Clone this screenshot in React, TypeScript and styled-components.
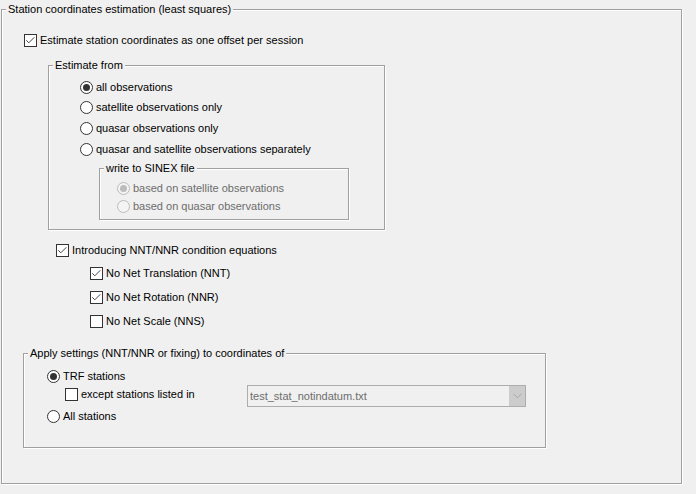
import React from "react";
import styled, { createGlobalStyle } from "styled-components";

const Global = createGlobalStyle`
  html, body { margin: 0; padding: 0; background: #f0f0f0; }
  body {
    font-family: "Liberation Sans", Arial, sans-serif;
    font-size: 11px;
    color: #000;
  }
`;

const Page = styled.div`
  width: 696px;
  height: 494px;
  overflow: hidden;
  box-sizing: border-box;
  padding: 9px 0 0 1px;
  background: #f0f0f0;
  display: flex;
  flex-direction: column;
  align-items: flex-start;
`;

const Group = styled.div<{ $w: number; $h: number; $ml?: number; $mt?: number }>`
  position: relative;
  box-sizing: border-box;
  flex-shrink: 0;
  width: ${(p) => p.$w}px;
  height: ${(p) => p.$h}px;
  margin-left: ${(p) => p.$ml ?? 0}px;
  margin-top: ${(p) => p.$mt ?? 0}px;
  border: 1px solid #a0a0a0;
  box-shadow: inset 1px 1px 0 #fff, 1px 1px 0 #fff;
  display: flex;
  flex-direction: column;
  align-items: flex-start;
`;

const Legend = styled.span`
  position: absolute;
  top: -7px;
  left: 4px;
  padding: 0 2px;
  background: #f0f0f0;
  line-height: 13px;
  white-space: nowrap;
  color: #000;
`;

const Option = styled.label<{ $ml?: number; $mt?: number; $w?: number; $disabled?: boolean }>`
  display: flex;
  align-items: center;
  gap: 3px;
  height: 13px;
  flex-shrink: 0;
  margin-left: ${(p) => p.$ml ?? 0}px;
  margin-top: ${(p) => p.$mt ?? 0}px;
  ${(p) => (p.$w ? `width: ${p.$w}px;` : "")}
  line-height: 13px;
  white-space: nowrap;
  color: ${(p) => (p.$disabled ? "#6d6d6d" : "#000")};
`;

const CheckBox = styled.span`
  width: 13px;
  height: 13px;
  box-sizing: border-box;
  flex-shrink: 0;
  border: 1px solid #333;
  background: #fff;
  display: flex;
`;

const RadioBox = styled.span<{ $checked?: boolean; $disabled?: boolean }>`
  width: 13px;
  height: 13px;
  box-sizing: border-box;
  flex-shrink: 0;
  border-radius: 50%;
  border: 1px solid ${(p) => (p.$disabled ? "#bcbcbc" : "#333")};
  background: ${(p) => (p.$disabled ? "#f4f4f4" : "#fff")};
  display: flex;
  align-items: center;
  justify-content: center;
  &::after {
    content: "";
    display: ${(p) => (p.$checked ? "block" : "none")};
    width: 7px;
    height: 7px;
    border-radius: 50%;
    background: ${(p) => (p.$disabled ? "#bcbcbc" : "#333")};
  }
`;

const Row = styled.div<{ $ml?: number; $mt?: number }>`
  display: flex;
  align-items: flex-start;
  margin-left: ${(p) => p.$ml ?? 0}px;
  margin-top: ${(p) => p.$mt ?? 0}px;
`;

const Combo = styled.div`
  width: 279px;
  height: 22px;
  box-sizing: border-box;
  border: 1px solid #adadad;
  background: #f0f0f0;
  display: flex;
  align-items: stretch;
`;

const ComboText = styled.span`
  flex: 1;
  padding-left: 2px;
  line-height: 20px;
  color: #6d6d6d;
  white-space: nowrap;
  overflow: hidden;
`;

const ComboButton = styled.span`
  width: 16px;
  background: #cccccc;
  display: flex;
  align-items: center;
  justify-content: center;
`;

const Check = ({ checked }: { checked: boolean }) => (
  <CheckBox>
    {checked && (
      <svg width="11" height="11" viewBox="0 0 11 11">
        <polyline points="1.3,5.3 3.8,7.8 9.3,2.3" fill="none" stroke="#444" strokeWidth="1" />
      </svg>
    )}
  </CheckBox>
);

export default function App() {
  return (
    <>
      <Global />
      <Page>
        <Group $w={681} $h={475}>
          <Legend>Station coordinates estimation (least squares)</Legend>

          <Option $ml={22} $mt={24}>
            <Check checked />
            Estimate station coordinates as one offset per session
          </Option>

          <Group $w={337} $h={165} $ml={46} $mt={18}>
            <Legend>Estimate from</Legend>
            <Option $ml={31} $mt={15}>
              <RadioBox $checked />
              all observations
            </Option>
            <Option $ml={31} $mt={7}>
              <RadioBox />
              satellite observations only
            </Option>
            <Option $ml={31} $mt={8}>
              <RadioBox />
              quasar observations only
            </Option>
            <Option $ml={31} $mt={8}>
              <RadioBox />
              quasar and satellite observations separately
            </Option>

            <Group $w={250} $h={52} $ml={50} $mt={12}>
              <Legend>write to SINEX file</Legend>
              <Option $ml={17} $mt={13} $disabled>
                <RadioBox $checked $disabled />
                based on satellite observations
              </Option>
              <Option $ml={17} $mt={5} $disabled>
                <RadioBox $disabled />
                based on quasar observations
              </Option>
            </Group>
          </Group>

          <Option $ml={54} $mt={14}>
            <Check checked />
            Introducing NNT/NNR condition equations
          </Option>
          <Option $ml={88} $mt={10}>
            <Check checked />
            No Net Translation (NNT)
          </Option>
          <Option $ml={88} $mt={11}>
            <Check checked />
            No Net Rotation (NNR)
          </Option>
          <Option $ml={88} $mt={11}>
            <Check checked={false} />
            No Net Scale (NNS)
          </Option>

          <Group $w={523} $h={95} $ml={21} $mt={25}>
            <Legend>Apply settings (NNT/NNR or fixing) to coordinates of</Legend>
            <Option $ml={23} $mt={16}>
              <RadioBox $checked />
              TRF stations
            </Option>
            <Row $ml={41} $mt={2}>
              <Option $mt={3} $w={182}>
                <Check checked={false} />
                except stations listed in
              </Option>
              <Combo>
                <ComboText>test_stat_notindatum.txt</ComboText>
                <ComboButton>
                  <svg width="9" height="6" viewBox="0 0 9 6">
                    <polyline points="0.5,0.8 4.5,4.8 8.5,0.8" fill="none" stroke="#a6a6a6" strokeWidth="1" />
                  </svg>
                </ComboButton>
              </Combo>
            </Row>
            <Option $ml={23} $mt={3}>
              <RadioBox />
              All stations
            </Option>
          </Group>
        </Group>
      </Page>
    </>
  );
}
